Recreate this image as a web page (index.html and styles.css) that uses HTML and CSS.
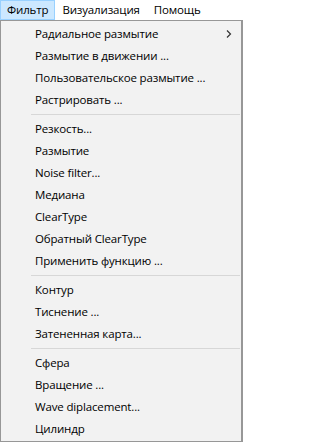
FILE: index.html
```html
<!DOCTYPE html>
<html lang="ru">
<head>
<meta charset="utf-8">
<link rel="stylesheet" href="styles.css">
</head>
<body>
<div class="menubar">
  <span class="top active">Фильтр</span>
  <span class="top">Визуализация</span>
  <span class="top">Помощь</span>
</div>
<div class="dropdown">
  <div class="item"><span>Радиальное размытие</span><svg class="arrow" width="6" height="8" viewBox="0 0 6 8"><path d="M1 0.5 L4.5 4 L1 7.5" fill="none" stroke="#333" stroke-width="1.2"/></svg></div>
  <div class="item"><span>Размытие в движении ...</span></div>
  <div class="item"><span>Пользовательское размытие ...</span></div>
  <div class="item"><span>Растрировать ...</span></div>
  <div class="sep"></div>
  <div class="item"><span>Резкость...</span></div>
  <div class="item"><span>Размытие</span></div>
  <div class="item"><span>Noise filter...</span></div>
  <div class="item"><span>Медиана</span></div>
  <div class="item"><span>ClearType</span></div>
  <div class="item"><span>Обратный ClearType</span></div>
  <div class="item"><span>Применить функцию ...</span></div>
  <div class="sep"></div>
  <div class="item"><span>Контур</span></div>
  <div class="item"><span>Тиснение ...</span></div>
  <div class="item"><span>Затененная карта...</span></div>
  <div class="sep"></div>
  <div class="item"><span>Сфера</span></div>
  <div class="item"><span>Вращение ...</span></div>
  <div class="item"><span>Wave diplacement...</span></div>
  <div class="item"><span>Цилиндр</span></div>
</div>
</body>
</html>
```
FILE: styles.css
```css
html, body {
  margin: 0;
  padding: 0;
  background: #ffffff;
}
body {
  width: 243px;
  height: 442px;
  overflow: hidden;
  font-family: "Open Sans", "Noto Sans", sans-serif;
  font-size: 11.5px;
  letter-spacing: -0.15px;
  color: #000;
}
.menubar {
  display: flex;
  height: 20px;
  background: #fff;
}
.top {
  box-sizing: border-box;
  height: 20px;
  padding: 0 6px;
  line-height: 18px;
  border: 1px solid transparent;
}
.active {
  background: #cce8ff;
  border-color: #99d1ff;
}
.dropdown {
  box-sizing: border-box;
  height: 422px;
  width: 243px;
  background: #f2f2f2;
  border: 1px solid #979797;
  border-right-width: 2px;
  padding: 2px 0 1px 0;
  display: flex;
  flex-direction: column;
}
.item {
  height: 22px;
  display: flex;
  align-items: center;
  justify-content: space-between;
  padding-left: 34px;
  padding-right: 9px;
  line-height: 22px;
}
.arrow {
  display: block;
}
.sep {
  height: 7px;
  display: flex;
  align-items: center;
  padding-left: 30px;
  padding-right: 1px;
}
.sep::after {
  content: "";
  flex: 1;
  height: 1px;
  background: #d7d7d7;
}
```
